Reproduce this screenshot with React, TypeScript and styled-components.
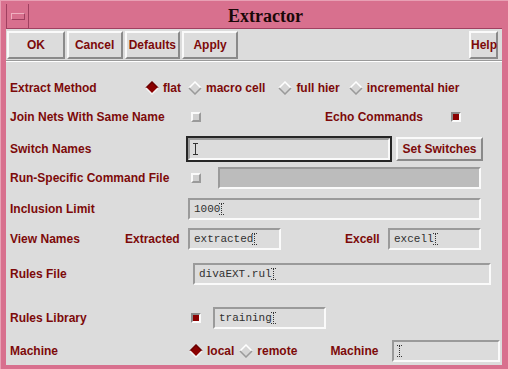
import React from "react"
import styled, { createGlobalStyle } from "styled-components"

const GlobalStyle = createGlobalStyle`
  html, body {
    margin: 0;
    padding: 0;
    background: #d8708e;
  }
  body {
    font-family: "Liberation Sans", Arial, sans-serif;
  }
`

const ink = "#7c0a0a"
const face = "#dcdcdc"

const Frame = styled.div`
  width: 508px;
  height: 369px;
  box-sizing: border-box;
  background: #d8708e;
  padding: 3px 6px 4px 5px;
  display: flex;
  flex-direction: column;
  border-top: 1px solid #e8a0b4;
  border-left: 1px solid #e8a0b4;
`

const TitleBar = styled.div`
  height: 24px;
  display: flex;
  align-items: stretch;
  border-bottom: 1px solid #a04060;
`

const MenuBox = styled.div`
  width: 21px;
  border-right: 1px solid #a04060;
  border-left: 1px solid #a04060;
  display: flex;
  align-items: center;
  justify-content: center;
`

const MenuBar = styled.div`
  width: 12px;
  height: 5px;
  border-top: 1px solid #f0b0c0;
  border-left: 1px solid #f0b0c0;
  border-bottom: 1px solid #a04060;
  border-right: 1px solid #a04060;
`

const Title = styled.div`
  flex: 1;
  text-align: center;
  font-family: "Liberation Serif", "Times New Roman", serif;
  font-weight: bold;
  font-size: 18px;
  line-height: 24px;
  color: #1a0808;
`

const Body = styled.div`
  flex: 1;
  background: ${face};
  display: flex;
  flex-direction: column;
`

const ButtonBar = styled.div`
  height: 31px;
  display: flex;
  align-items: center;
  gap: 2px;
  padding: 0 4px 0 1px;
  border-bottom: 1px solid #9a9a9a;
  box-shadow: 0 1px 0 #fff;
`

const Button = styled.button<{ $w: number; $ml?: number }>`
  width: ${(p) => p.$w}px;
  height: 28px;
  margin-left: ${(p) => p.$ml ?? 0}px;
  box-sizing: border-box;
  background: ${face};
  border: 2px solid;
  border-color: #fafafa #8a8a8a #8a8a8a #fafafa;
  font-family: "Liberation Sans", Arial, sans-serif;
  font-weight: bold;
  font-size: 12px;
  color: ${ink};
  padding: 0;
`

const Form = styled.div`
  padding-left: 4px;
  display: flex;
  flex-direction: column;
`

const Row = styled.div<{ $top: number; $h: number }>`
  margin-top: ${(p) => p.$top}px;
  height: ${(p) => p.$h}px;
  display: flex;
  align-items: center;
`

const Label = styled.span<{ $w?: number; $ml?: number }>`
  width: ${(p) => (p.$w ? `${p.$w}px` : "auto")};
  margin-left: ${(p) => p.$ml ?? 0}px;
  flex-shrink: 0;
  font-weight: bold;
  font-size: 12px;
  color: ${ink};
  white-space: nowrap;
`

const Field = styled.div<{ $w: number; $ml?: number; $disabled?: boolean }>`
  width: ${(p) => p.$w}px;
  height: 22px;
  margin-left: ${(p) => p.$ml ?? 0}px;
  box-sizing: border-box;
  flex-shrink: 0;
  border: 2px solid;
  border-color: #9a9a9a #fafafa #fafafa #9a9a9a;
  background: ${(p) => (p.$disabled ? "#bcbcbc" : face)};
  font-family: "Liberation Mono", "Courier New", monospace;
  font-size: 11px;
  color: #303030;
  display: flex;
  align-items: center;
  padding-left: 4px;
`

const Focus = styled.div<{ $w: number; $ml?: number }>`
  width: ${(p) => p.$w}px;
  height: 26px;
  margin-left: ${(p) => p.$ml ?? 0}px;
  box-sizing: border-box;
  border: 2px solid #262626;
  display: flex;
  flex-shrink: 0;
  & > div {
    flex: 1;
    height: 22px;
    margin: 0;
  }
`

const Caret = styled.span<{ $solid?: boolean }>`
  display: inline-block;
  width: 1px;
  height: 12px;
  margin-left: 1px;
  border-left: 1px ${(p) => (p.$solid ? "solid" : "dotted")} #333;
  position: relative;
  &::before,
  &::after {
    content: "";
    position: absolute;
    left: -3px;
    width: 5px;
    border-top: 1px ${(p) => (p.$solid ? "solid" : "dotted")} #333;
  }
  &::before {
    top: 0;
  }
  &::after {
    bottom: 0;
  }
`

const Check = styled.span<{ $on?: boolean; $ml: number }>`
  width: 10px;
  height: 10px;
  margin-left: ${(p) => p.$ml}px;
  box-sizing: border-box;
  flex-shrink: 0;
  border: 2px solid;
  border-color: ${(p) =>
    p.$on ? "#8a8a8a #fafafa #fafafa #8a8a8a" : "#fafafa #9a9a9a #9a9a9a #fafafa"};
  background: ${(p) => (p.$on ? "#8a0000" : "#d0d0d0")};
`

const RadioWrap = styled.span<{ $ml: number }>`
  display: inline-flex;
  align-items: center;
  margin-left: ${(p) => p.$ml}px;
  gap: 4px;
  flex-shrink: 0;
`

const Radio: React.FC<{ on?: boolean; label: string; ml: number }> = ({ on, label, ml }) => (
  <RadioWrap $ml={ml}>
    <svg width="14" height="14" viewBox="0 0 14 14">
      <polygon points="7,1 13,7 7,13 1,7" fill={on ? "#8a0000" : "#d6d6d6"} />
      <polyline points="1,7 7,1 13,7" fill="none" stroke={on ? "#6a0000" : "#ffffff"} strokeWidth="1.5" />
      <polyline points="1,7 7,13 13,7" fill="none" stroke={on ? "#f4f4f4" : "#9a9a9a"} strokeWidth="1.5" />
    </svg>
    <Label>{label}</Label>
  </RadioWrap>
)

export default function App() {
  return (
    <>
      <GlobalStyle />
      <Frame>
        <TitleBar>
          <MenuBox>
            <MenuBar />
          </MenuBox>
          <Title>Extractor</Title>
        </TitleBar>
        <Body>
          <ButtonBar>
            <Button $w={58}>OK</Button>
            <Button $w={56}>Cancel</Button>
            <Button $w={56}>Defaults</Button>
            <Button $w={56}>Apply</Button>
            <Button $w={29} $ml={229}>Help</Button>
          </ButtonBar>
          <Form>
            <Row $top={15} $h={24}>
              <Label $w={135}>Extract Method</Label>
              <Radio on label="flat" ml={0} />
              <Radio label="macro cell" ml={7} />
              <Radio label="full hier" ml={13} />
              <Radio label="incremental hier" ml={9} />
            </Row>
            <Row $top={5} $h={24}>
              <Label $w={181}>Join Nets With Same Name</Label>
              <Check $ml={0} />
              <Label $ml={124}>Echo Commands</Label>
              <Check $on $ml={28} />
            </Row>
            <Row $top={7} $h={26}>
              <Label $w={176}>Switch Names</Label>
              <Focus $w={206}>
                <Field $w={202}>
                  <Caret $solid />
                </Field>
              </Focus>
              <Button $w={87} $ml={4} style={{ height: 24 }}>
                Set Switches
              </Button>
            </Row>
            <Row $top={4} $h={24}>
              <Label $w={181}>Run-Specific Command File</Label>
              <Check $ml={0} />
              <Field $w={263} $ml={17} $disabled />
            </Row>
            <Row $top={7} $h={24}>
              <Label $w={178}>Inclusion Limit</Label>
              <Field $w={293}>
                1000
                <Caret />
              </Field>
            </Row>
            <Row $top={6} $h={24}>
              <Label $w={115}>View Names</Label>
              <Label $w={63}>Extracted</Label>
              <Field $w={93}>
                extracted
                <Caret />
              </Field>
              <Label $ml={64} $w={43}>Excell</Label>
              <Field $w={93}>
                excell
                <Caret />
              </Field>
            </Row>
            <Row $top={11} $h={24}>
              <Label $w={183}>Rules File</Label>
              <Field $w={298}>
                divaEXT.rul
                <Caret />
              </Field>
            </Row>
            <Row $top={20} $h={24}>
              <Label $w={181}>Rules Library</Label>
              <Check $on $ml={0} />
              <Field $w={113} $ml={12}>
                training
                <Caret />
              </Field>
            </Row>
            <Row $top={9} $h={24}>
              <Label $w={179}>Machine</Label>
              <Radio on label="local" ml={0} />
              <Radio label="remote" ml={5} />
              <Label $ml={33} $w={62}>Machine</Label>
              <Field $w={108}>
                <Caret />
              </Field>
            </Row>
          </Form>
        </Body>
      </Frame>
    </>
  )
}
